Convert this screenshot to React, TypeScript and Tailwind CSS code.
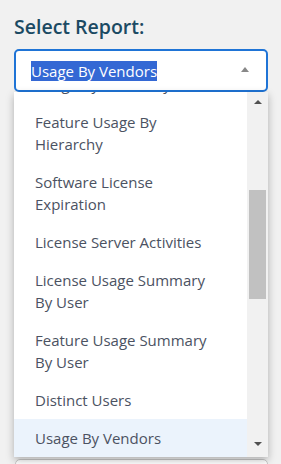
import React from "react";

const items: string[][] = [
  ["Usage By Hierarchy"],
  ["Feature Usage By", "Hierarchy"],
  ["Software License", "Expiration"],
  ["License Server Activities"],
  ["License Usage Summary", "By User"],
  ["Feature Usage Summary", "By User"],
  ["Distinct Users"],
  ["Usage By Vendors"],
];

export default function App() {
  return (
    <div
      className="w-[281px] h-[464px] overflow-hidden bg-[#f1f1f1] px-[14px] pt-[14px]"
      style={{ fontFamily: '"Open Sans", "Noto Sans", sans-serif' }}
    >
      <div className="text-[19.5px] leading-[26px] font-semibold text-[#1b4a63]">Select Report:</div>
      <div className="relative mt-[9px] w-[254px]">
        <div className="h-[43px] rounded-[5px] border-2 border-[#1f74d6] bg-white flex items-center pl-[15px] pr-[17px]">
          <span className="bg-[#3468d4] text-white text-[15px] leading-[20px]">Usage By Vendors</span>
          <span className="ml-auto -mt-[3px] w-0 h-0 border-l-[4px] border-r-[4px] border-b-[5px] border-l-transparent border-r-transparent border-b-[#888888]" />
        </div>
        <div className="absolute left-0 top-full z-10 w-[254px] h-[365px] bg-white flex shadow-[0_3px_8px_rgba(0,0,0,0.28)]">
          <div className="flex-1 overflow-hidden">
            <div className="-mt-[27px]">
              {items.map((lines, i) => (
                <div
                  key={i}
                  className={`pl-[21px] py-[8px] text-[15px] leading-[22px] text-[#4b5262] ${
                    i === items.length - 1 ? "bg-[#ebf3fc]" : ""
                  }`}
                >
                  {lines.map((l, j) => (
                    <div key={j}>{l}</div>
                  ))}
                </div>
              ))}
            </div>
          </div>
          <div className="w-[21px] bg-[#f1f1f1] flex flex-col items-center">
            <div className="h-[20px] flex items-center justify-center">
              <span className="w-0 h-0 border-l-[4px] border-r-[4px] border-b-[4px] border-l-transparent border-r-transparent border-b-[#505050]" />
            </div>
            <div className="mt-[78px] w-[17px] h-[109px] bg-[#c1c1c1]" />
            <div className="mt-auto h-[24px] flex items-center justify-center">
              <span className="-mt-[2px] w-0 h-0 border-l-[4px] border-r-[4px] border-t-[4px] border-l-transparent border-r-transparent border-t-[#505050]" />
            </div>
          </div>
        </div>
      </div>
      <div className="mt-[367px] ml-[1px] w-[253px] h-[40px] rounded-[5px] border border-[#c8c8c8] bg-white" />
    </div>
  );
}
